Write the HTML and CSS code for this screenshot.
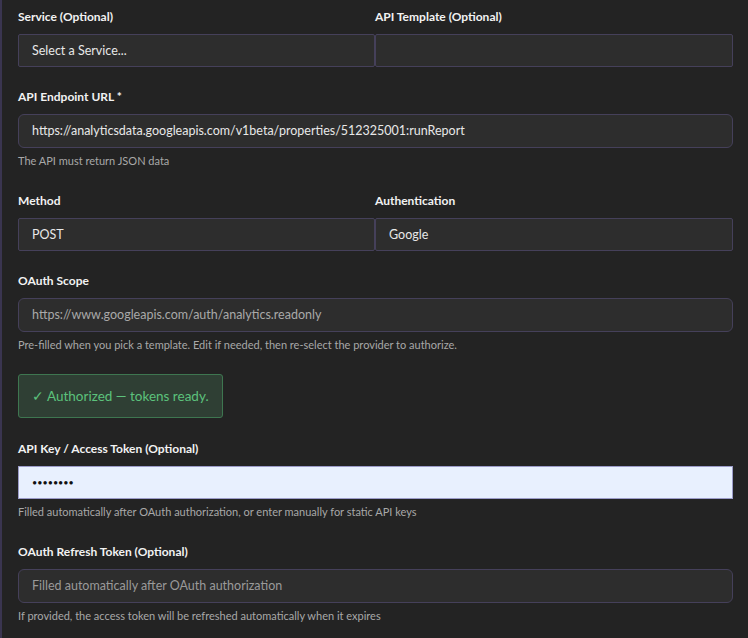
FILE: index.html
```html
<!DOCTYPE html>
<html lang="en">
<head>
<meta charset="utf-8">
<title>API Settings</title>
<link rel="stylesheet" href="styles.css">
</head>
<body>
<div class="panel">
  <div class="row two">
    <div class="group">
      <label class="label">Service (Optional)</label>
      <div class="select">Select a Service...</div>
    </div>
    <div class="group">
      <label class="label">API Template (Optional)</label>
      <div class="select"></div>
    </div>
  </div>

  <div class="group">
    <label class="label">API Endpoint URL *</label>
    <div class="input">https://analyticsdata.googleapis.com/v1beta/properties/512325001:runReport</div>
    <div class="help">The API must return JSON data</div>
  </div>

  <div class="row two">
    <div class="group">
      <label class="label">Method</label>
      <div class="select">POST</div>
    </div>
    <div class="group">
      <label class="label">Authentication</label>
      <div class="select">Google</div>
    </div>
  </div>

  <div class="group">
    <label class="label">OAuth Scope</label>
    <div class="input muted">https://www.googleapis.com/auth/analytics.readonly</div>
    <div class="help">Pre-filled when you pick a template. Edit if needed, then re-select the provider to authorize.</div>
  </div>

  <div class="group auth-group">
    <div class="auth-ok">✓ Authorized — tokens ready.</div>
  </div>

  <div class="group">
    <label class="label">API Key / Access Token (Optional)</label>
    <div class="input autofill">••••••••</div>
    <div class="help">Filled automatically after OAuth authorization, or enter manually for static API keys</div>
  </div>

  <div class="group">
    <label class="label">OAuth Refresh Token (Optional)</label>
    <div class="input placeholder">Filled automatically after OAuth authorization</div>
    <div class="help">If provided, the access token will be refreshed automatically when it expires</div>
  </div>
</div>
</body>
</html>
```

FILE: styles.css
```css
html, body {
  margin: 0;
  padding: 0;
  background: #232323;
}
body {
  font-family: Lato, "Noto Sans", sans-serif;
  color: #e6e6e6;
  height: 638px;
  overflow: hidden;
  border-left: 2px solid #3a3550;
  box-sizing: border-box;
}
.panel {
  padding: 9px 15px 0 16px;
}
.row.two {
  display: grid;
  grid-template-columns: 357px 358px;
  margin-bottom: 22px;
}
.group {
  display: flex;
  flex-direction: column;
  align-items: stretch;
  margin-bottom: 22px;
}
.row.two .group {
  margin-bottom: 0;
}
.auth-group {
  align-items: flex-start;
  margin-top: -3px;
  margin-bottom: 23px;
}
.label {
  display: block;
  font-size: 12px;
  font-weight: 700;
  line-height: 16px;
  margin-bottom: 9px;
  color: #f2f2f2;
}
.select, .input {
  box-sizing: border-box;
  border: 1px solid #45405a;
  background: #2d2d2d;
  font-size: 12.5px;
  padding: 0 13px;
  color: #e8e8e8;
  white-space: nowrap;
  overflow: hidden;
}
.select {
  height: 33px;
  line-height: 31px;
  border-radius: 2px;
}
.input {
  height: 34px;
  line-height: 32px;
  border-radius: 6px;
}
.input.muted {
  color: #a9a9a9;
}
.input.placeholder {
  color: #9a9a9a;
}
.input.autofill {
  height: 33px;
  line-height: 31px;
  background: #e8f0fe;
  border-color: #9b9bc8;
  border-radius: 0;
  color: #111;
  font-size: 9px;
  letter-spacing: 0;
}
.help {
  font-size: 11px;
  line-height: 15px;
  margin-top: 5px;
  margin-bottom: 3px;
  color: #a8a8a8;
}
.help-tight {
  margin-bottom: 2px;
}
.auth-ok {
  box-sizing: border-box;
  height: 44px;
  line-height: 42px;
  padding: 0 13px;
  border: 1px solid #3e7650;
  border-radius: 3px;
  background: #2f3f34;
  color: #5cc27c;
  font-size: 13.5px;
}
```
